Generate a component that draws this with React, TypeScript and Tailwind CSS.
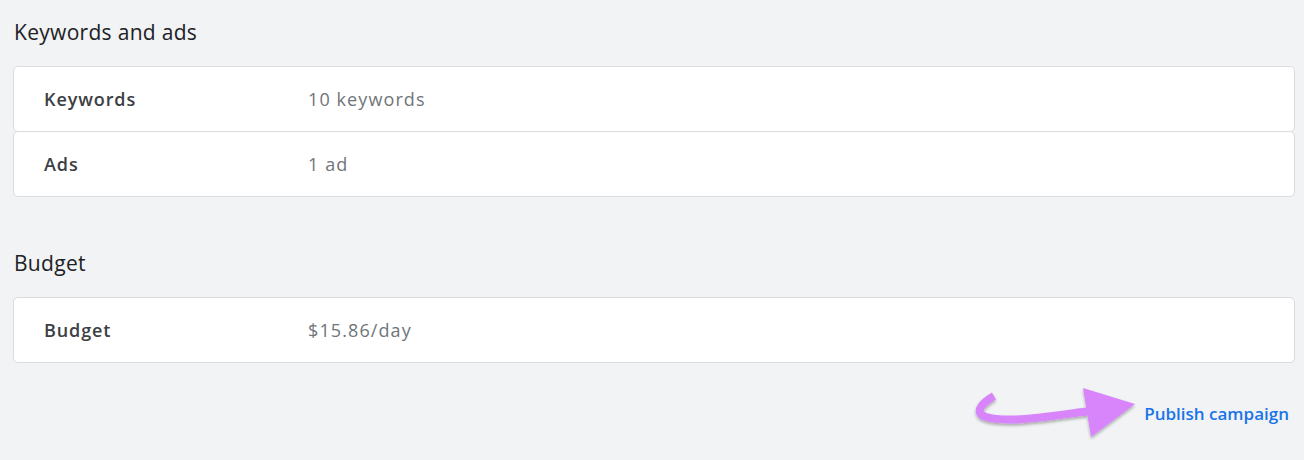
import React from 'react';

const FONT = { fontFamily: '"Open Sans", Roboto, Arial, sans-serif' };

function Row({ label, value, className = '' }: { label: string; value: string; className?: string }) {
  return (
    <div
      className={`flex items-center h-[66px] bg-white border border-[#dadce0] rounded-[5px] pl-[30px] ${className}`}
    >
      <div className="w-[264px] text-[18px] tracking-[0.9px] font-semibold text-[#3c4043]">{label}</div>
      <div className="text-[18px] tracking-[1.1px] text-[#70757a]">{value}</div>
    </div>
  );
}

function Arrow() {
  return (
    <svg width="170" height="60" viewBox="970 390 170 60" className="overflow-visible">
      <defs>
        <filter id="sh" x="-20%" y="-40%" width="140%" height="180%">
          <feDropShadow dx="0" dy="2" stdDeviation="1.5" floodColor="#000" floodOpacity="0.3" />
        </filter>
      </defs>
      <g filter="url(#sh)" fill="#d884fb" stroke="none">
        <path
          d="M996 402 C 986 408, 974 418, 988 423 C 1010 430, 1060 421, 1092 417"
          fill="none"
          stroke="#d884fb"
          strokeWidth="8"
          strokeLinecap="butt"
        />
        <polygon points="1085,394 1093,443 1137,410" />
      </g>
    </svg>
  );
}

export default function App() {
  return (
    <div className="w-[1304px] h-[460px] bg-[#f1f3f4] overflow-hidden" style={FONT}>
      <div className="pl-[13px] pr-[9px]">
        <h2 className="pt-[19px] pl-px text-[21px] tracking-[0.3px] leading-[26px] text-[#202124] font-normal">Keywords and ads</h2>
        <div className="mt-[21px]">
          <Row label="Keywords" value="10 keywords" />
          <Row label="Ads" value="1 ad" className="-mt-px" />
        </div>
        <h2 className="mt-[53px] pl-px text-[21px] tracking-[0.3px] leading-[26px] text-[#202124] font-normal">Budget</h2>
        <div className="mt-[21px]">
          <Row label="Budget" value="$15.86/day" />
        </div>
        <div className="flex items-center justify-end mt-[21px] pr-[6px]">
          <Arrow />
          <span className="ml-[6px] text-[17px] font-semibold text-[#1a73e8]">Publish campaign</span>
        </div>
      </div>
    </div>
  );
}
